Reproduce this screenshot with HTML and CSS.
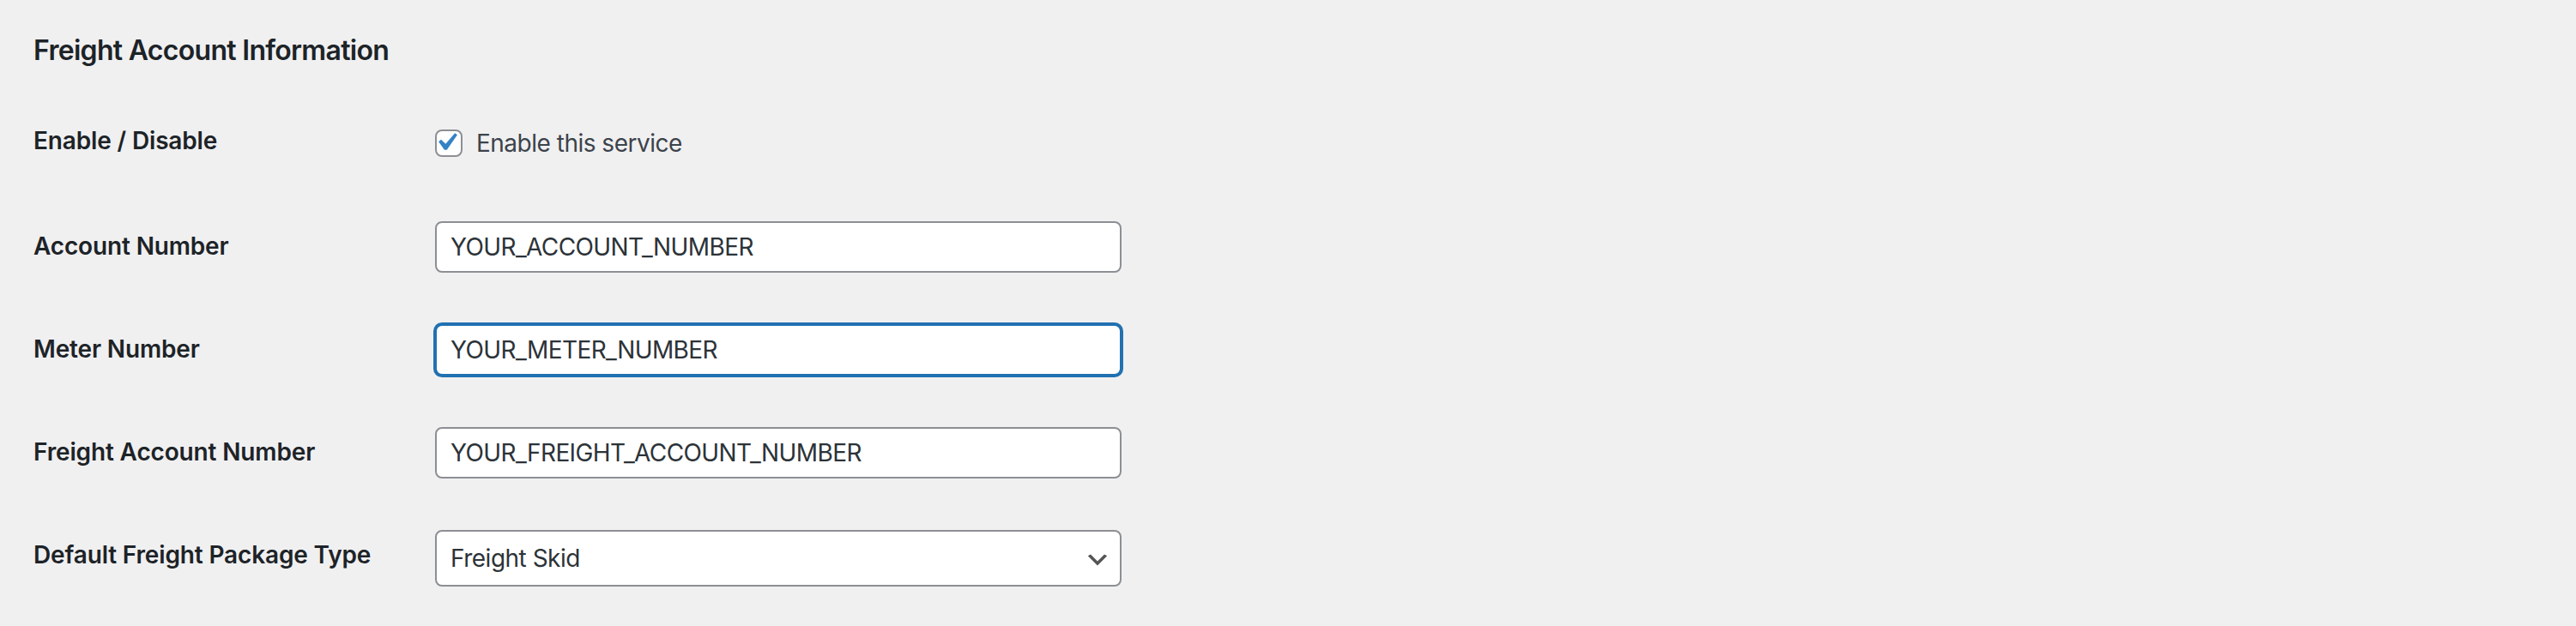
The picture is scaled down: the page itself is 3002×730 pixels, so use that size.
FILE: index.html
```html
<!DOCTYPE html>
<html lang="en">
<head>
    <meta charset="UTF-8">
    <meta name="viewport" content="width=device-width, initial-scale=1.0">
    <title>Freight Account Information</title>
    <link rel="stylesheet" href="styles.css">
</head>
<body>
    <div class="wrap">
        <h2 class="section-title">Freight Account Information</h2>

        <div class="form-table">
            <div class="form-row row-check">
                <div class="form-label">Enable / Disable</div>
                <div class="form-field">
                    <label class="check">
                        <span class="check-box">
                            <svg viewBox="0 0 20 20" width="42" height="42"><path d="M14.83 4.89l1.34.94-5.81 8.38H9.02L5.78 9.67l1.34-1.25 2.57 2.4z" fill="#3582c4"/></svg>
                        </span>
                        Enable this service
                    </label>
                </div>
            </div>

            <div class="form-row">
                <div class="form-label">Account Number</div>
                <div class="form-field">
                    <input class="text-input" type="text" value="YOUR_ACCOUNT_NUMBER">
                </div>
            </div>

            <div class="form-row">
                <div class="form-label">Meter Number</div>
                <div class="form-field">
                    <input class="text-input is-focus" type="text" value="YOUR_METER_NUMBER">
                </div>
            </div>

            <div class="form-row">
                <div class="form-label">Freight Account Number</div>
                <div class="form-field">
                    <input class="text-input" type="text" value="YOUR_FREIGHT_ACCOUNT_NUMBER">
                </div>
            </div>

            <div class="form-row">
                <div class="form-label">Default Freight Package Type</div>
                <div class="form-field">
                    <div class="select-wrap">
                        <select class="select-input">
                            <option>Freight Skid</option>
                            <option>Freight Pallet</option>
                        </select>
                        <svg class="select-arrow" viewBox="0 0 20 20" width="32" height="32"><path d="M5 6l5 5 5-5 2 1-7 7-7-7 2-1z" fill="#555"/></svg>
                    </div>
                </div>
            </div>
        </div>
    </div>
</body>
</html>
```

FILE: styles.css
```css
body {
    margin: 0;
    background: #f0f0f1;
    color: #3c434a;
    font-family: Inter, "Noto Sans", sans-serif;
}

.wrap {
    padding: 0 0 0 39px;
}

.section-title {
    margin: 38px 0 28px;
    font-size: 32px;
    line-height: 1.3;
    font-weight: 600;
    letter-spacing: -0.7px;
    color: #1d2327;
}

.form-row {
    display: flex;
    height: 120px;
}

.form-label {
    width: 468px;
    padding-top: 41px;
    font-size: 28px;
    line-height: 36px;
    font-weight: 600;
    letter-spacing: -0.15px;
    color: #1d2327;
}

.form-field {
    padding-top: 30px;
}

.row-check .form-label {
    padding-top: 38px;
}

.row-check .form-field {
    padding-top: 41px;
}

.check {
    display: flex;
    align-items: center;
    height: 36px;
    font-size: 28px;
    line-height: 36px;
    letter-spacing: -0.5px;
    color: #3c434a;
}

.check-box {
    position: relative;
    box-sizing: border-box;
    width: 32px;
    height: 32px;
    margin-right: 16px;
    background: #fff;
    border: 2px solid #8c8f94;
    border-radius: 8px;
}

.check-box svg {
    position: absolute;
    top: -8px;
    left: -10px;
}

.text-input {
    box-sizing: border-box;
    width: 800px;
    height: 60px;
    margin: 0;
    padding: 0 16px;
    font-family: inherit;
    font-size: 28px;
    line-height: 56px;
    letter-spacing: -0.6px;
    color: #2c3338;
    background: #fff;
    border: 2px solid #8c8f94;
    border-radius: 8px;
    outline: none;
}

.text-input.is-focus {
    border-color: #2271b1;
    box-shadow: 0 0 0 2px #2271b1;
}

.select-wrap {
    position: relative;
    width: 800px;
}

.select-input {
    box-sizing: border-box;
    width: 800px;
    height: 66px;
    margin: 0;
    padding: 0 48px 0 16px;
    font-family: inherit;
    font-size: 28px;
    line-height: 62px;
    letter-spacing: -0.5px;
    color: #2c3338;
    background: #fff;
    border: 2px solid #8c8f94;
    border-radius: 8px;
    appearance: none;
    -webkit-appearance: none;
}

.select-arrow {
    position: absolute;
    right: 12px;
    top: 19px;
    pointer-events: none;
}
```
